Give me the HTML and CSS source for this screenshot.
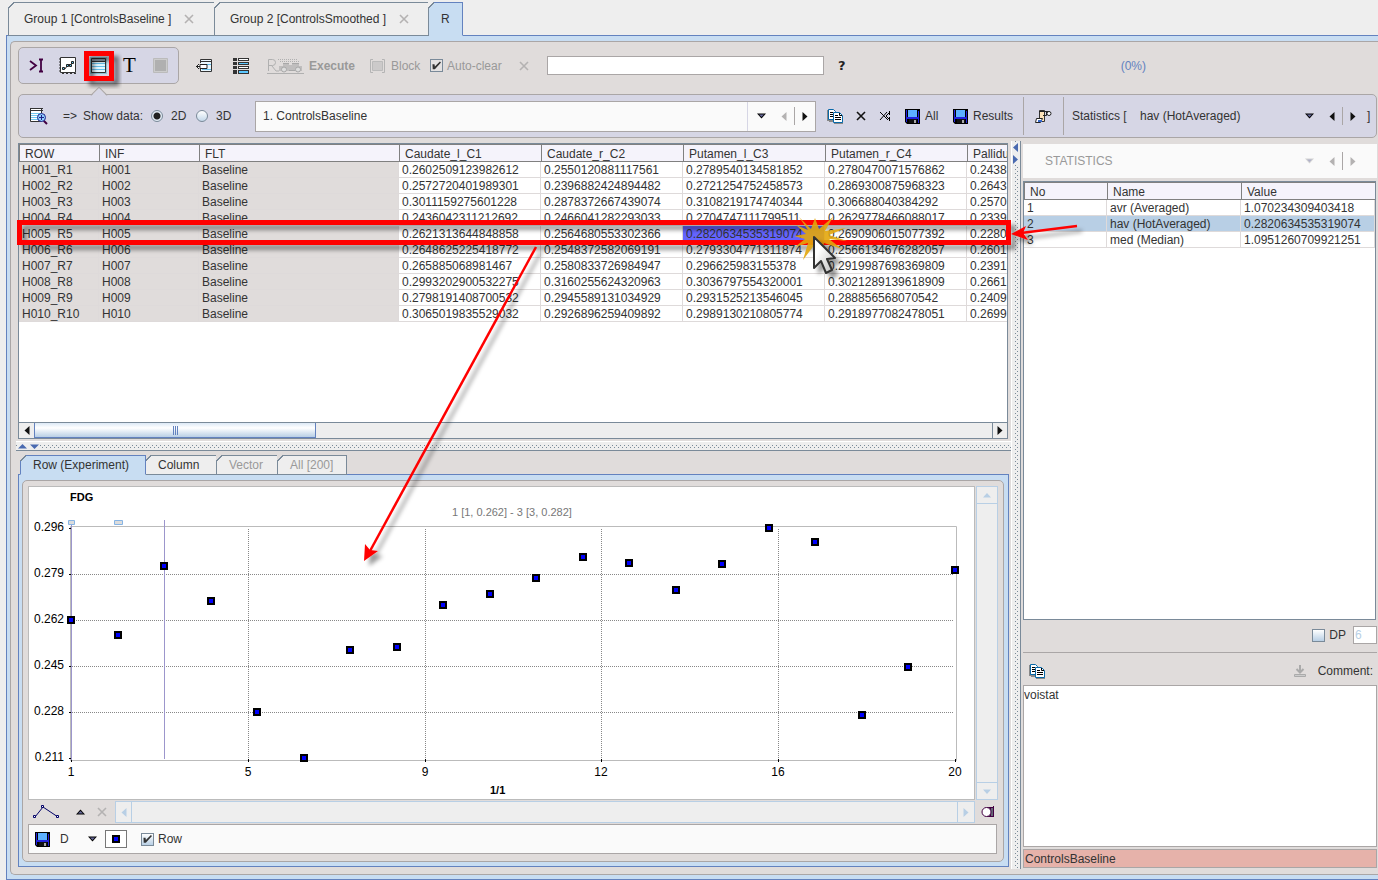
FILE: index.html
```html
<!DOCTYPE html>
<html lang="en">
<head>
<meta charset="utf-8">
<title>R Console</title>
<link rel="stylesheet" href="styles.css">
</head>
<body>
<svg class="defs" aria-hidden="true">
  <defs>
    <symbol id="disk" viewBox="0 0 15 15"><path d="M0 0h15v15H2l-2-2z" fill="#000"/><path d="M1 1h1v12H1zM13 2h1v12h-1zM2 8h11v2H2z" fill="#2222dd"/><path d="M3 1h9v7H3z" fill="#5cb0ff"/><path d="M4 10h8v4H4z" fill="#111"/><path d="M9 11h2v3H9z" fill="#aaa"/></symbol>
    <symbol id="copy" viewBox="0 0 17 15"><path d="M0 1h2v11H0zM2 11h4v2H2zM7 13h9v2H7z" fill="#888"/><path d="M1.500.5h5l2 2V10.500h-7z" fill="#fff" stroke="#0868a8"/><path d="M3 3.500h3M3 5.500h3M3 7.500h3" stroke="#000"/><path d="M6.500 3.500h6l3 3v7h-9z" fill="#fff" stroke="#0868a8"/><path d="M12.500 4v2.500H15M8 6.500h3M8 8.500h6M8 10.500h6" stroke="#000" fill="none"/></symbol>
    <symbol id="down" viewBox="0 0 9 6"><path d="M0 .5h9L4.500 5.500z" fill="currentColor"/><path d="M2 1.500h5L4.500 4z" fill="#66689a"/></symbol>
    <symbol id="left" viewBox="0 0 6 9"><path d="M5.500 0v9L.5 4.500z" fill="currentColor"/></symbol>
    <symbol id="right" viewBox="0 0 6 9"><path d="M.5 0v9l5-4.500z" fill="currentColor"/></symbol>
    <symbol id="cross" viewBox="0 0 10 10"><path d="M1 1l8 8M9 1L1 9" stroke="currentColor" stroke-width="1.600"/></symbol>
    <g id="pt"><path d="M0 0h8v8H0z" fill="#000"/><path d="M2 2h4v4H2z" fill="#00f"/></g>
  </defs>
</svg>

<div class="app">
  <nav class="tabs">
    <button class="tab tab-1">Group 1 [ControlsBaseline ] <svg class="x10 dim"><use href="#cross"/></svg></button>
    <button class="tab tab-2">Group 2 [ControlsSmoothed ] <svg class="x10 dim"><use href="#cross"/></svg></button>
    <button class="tab tab-3 active">R</button>
  </nav>

  <main class="pane">
    <div class="panel">
      <div class="toolbar">
        <div class="group">
          <button aria-label="Console"><svg width="17" height="17" viewBox="0 0 17 17"><path d="M1 4l6 4.500L1 13M10 2.500h4M10 14.500h4M12 2v12" fill="none" stroke="#420042" stroke-width="1.800"/></svg></button>
          <button aria-label="Plots"><svg width="17" height="17" viewBox="0 0 17 17"><path d="M1.500.5h15v15h-15z" fill="#fff" stroke="#333" /><path d="M0 2h2M0 5h2M0 8h2M0 11h2M0 14h2M3 16.500h2M7 16.500h2M11 16.500h2M15 16.500h2" stroke="#333"/><path d="M4.500 11.500h2l2-4h3l2-2" stroke="#222" fill="none"/><path d="M3.500 10.500h2v2h-2zM7.500 7.500h2v2h-2zM10.500 7.500h2v2h-2zM12.500 4.500h2v2h-2z" fill="#5cc8f0" stroke="#222"/></svg></button>
          <button aria-label="Data"><svg width="17" height="17" viewBox="0 0 17 17"><path d="M0 0h17v17H0z" fill="#8cc4d4"/><path d="M2 4h13v11H2z" fill="#e4f8ff"/><path d="M2 6.500h13M2 9.500h13M2 12.500h13" stroke="#65bfea"/><path d="M1.500 1.500h14v14h-14zM1 4.500h15" fill="none" stroke="#333"/><path d="M2 2h13v2H2z" fill="#9ab"/></svg></button>
          <button class="glyph" aria-label="Text">T</button>
          <button aria-label="Stop"><svg width="15" height="15" viewBox="0 0 15 15"><path d="M.5.5h14v14H.5z" fill="#ccc" stroke="#bbb"/><path d="M2 2h11v11H2z" fill="#b0b0b0"/></svg></button>
          <span class="pointer"></span>
        </div>
        <button aria-label="Import"><svg width="17" height="15" viewBox="0 0 17 15"><path d="M5 1h11v13H5z" fill="#eaf8ff"/><path d="M6 6.500h9M6 11.500h9" stroke="#65bfea"/><path d="M4.500 5V1.500h11v12h-11V11M5 3.500h11" fill="none" stroke="#333"/><path d="M2 7h9v3H2z" fill="#fff"/><path d="M0 8.500h4V6.500h7v4H4v-2M3 6L.5 8.500 3 11" fill="none" stroke="#222"/></svg></button>
        <button aria-label="List"><svg width="16" height="16" viewBox="0 0 16 16"><path d="M0 0h4v3H0zM0 4h4v3H0zM0 8h4v3H0zM0 12h4v4H0zM5 0h11v3H5zM5 4h11v3H5zM5 8h11v3H5zM5 12h11v4H5z" fill="#333"/><path d="M6 5h9v1H6zM6 13h9v2H6z" fill="#5cc8ff"/><path d="M6 1h9v1H6zM6 9h9v1H6z" fill="#fff"/></svg></button>
        <button class="exec" disabled><svg width="37" height="16" viewBox="0 0 37 16"><path d="M1.500 13V1.500h4q3 0 3 3t-3 3h-4M5 8l4 5h3M0 15.500h37" fill="none" stroke="#b0b0b0"/><path d="M11 1.500h20M13 3.500h20" stroke="#b0b0b0" stroke-dasharray="1 1"/><path d="M12 8h4V5h6v2h3V5h7v3h3v5H12z" fill="#c0bebe"/><circle cx="17" cy="11.500" r="2.500" fill="#ddd" stroke="#a8a8a8"/><circle cx="31" cy="11.500" r="2.500" fill="#ddd" stroke="#a8a8a8"/><path d="M22 12.500h6M16 5.500h6M25 5.500h7" stroke="#a8a8a8"/></svg>Execute</button>
        <button class="block" disabled><svg width="15" height="14" viewBox="0 0 15 14"><path d="M3 .5H.5v13H3M12 .5h2.500v13H12" fill="none" stroke="#b4b4b4"/><path d="M2.500 2.500h10v9h-10z" fill="#cccaca" stroke="#bbb"/></svg>Block</button>
        <label class="check auto"><input type="checkbox" checked disabled>Auto-clear</label>
        <svg class="x10 dim clear"><use href="#cross"/></svg>
        <input class="command" type="text" aria-label="Command">
        <button class="help">?</button>
        <span class="progress">(0%)</span>
      </div>

      <div class="databar">
        <button aria-label="Inspect"><svg width="18" height="18" viewBox="0 0 18 18"><path d="M.5 1.500h11v13H.5z" fill="#fff" stroke="#333"/><path d="M0 1.500h13M0 3.500h13" stroke="#333"/><path d="M1 6.500h11M1 8.500h11M1 10.500h11M1 12.500h11" stroke="#70c8f0"/><path d="M13 13l4 4" stroke="#420042" stroke-width="2"/><circle cx="11.500" cy="10.500" r="4" fill="#8fd0ff" stroke="#222288"/><path d="M9 10.500h5M11.500 8v5" stroke="#222288"/></svg></button>
        <span>=&gt;</span>
        <span>Show data:</span>
        <label class="radio"><input type="radio" name="dim" checked>2D</label>
        <label class="radio"><input type="radio" name="dim">3D</label>
        <div class="combo">
          <input type="text" value="1. ControlsBaseline" aria-label="Data set">
          <div class="steps"><button aria-label="Open"><svg class="dn"><use href="#down"/></svg></button><button aria-label="Previous" class="off"><svg class="sd"><use href="#left"/></svg></button><i></i><button aria-label="Next"><svg class="sd"><use href="#right"/></svg></button></div>
        </div>
        <button aria-label="Copy"><svg width="17" height="15"><use href="#copy"/></svg></button>
        <button aria-label="Remove"><svg class="x10"><use href="#cross"/></svg></button>
        <button aria-label="Remove all"><svg width="12" height="10" viewBox="0 0 12 10"><path d="M1 1l8 8M8 1L1 9M11 1L7 5l4 4M10.500 0v4M10.500 6v4" stroke="#000" fill="none"/></svg></button>
        <button><svg class="disk"><use href="#disk"/></svg>All</button>
        <button><svg class="disk"><use href="#disk"/></svg>Results</button>
        <i class="bar"></i>
        <button aria-label="Script"><svg width="17" height="15" viewBox="0 0 17 15"><path d="M4.500 1.500h5v11h-5z" fill="#fde3b8" stroke="#333"/><path d="M1.500 9.500h6l-2 4H.5z" fill="#fff" stroke="#222"/><path d="M3 12h4" stroke="#36c" stroke-width="2"/><path d="M4 2.500h10.500v3M8 6.500h3.500V3" stroke="#222" fill="none"/><circle cx="14" cy="4.500" r="2" fill="#fff" stroke="#222"/></svg></button>
        <i class="bar"></i>
        <span>Statistics [</span>
        <span>hav (HotAveraged)</span>
        <div class="steps"><button aria-label="Open"><svg class="dn"><use href="#down"/></svg></button><button aria-label="Previous"><svg class="sd"><use href="#left"/></svg></button><i></i><button aria-label="Next"><svg class="sd"><use href="#right"/></svg></button></div>
        <span>]</span>
      </div>

      <div class="split">
        <section class="left">
          <div class="grid-box">
            <div class="grid-view">
              <table class="data">
                <colgroup><col class="c80"><col class="c100"><col class="c200"><col class="c142"><col class="c142"><col class="c142"><col class="c142"><col class="c142"></colgroup>
                <thead><tr><th>ROW</th><th>INF</th><th>FLT</th><th>Caudate_l_C1</th><th>Caudate_r_C2</th><th>Putamen_l_C3</th><th>Putamen_r_C4</th><th>Pallidu</th></tr></thead>
                <tbody>
                  <tr><td>H001_R1</td><td>H001</td><td>Baseline</td><td>0.2602509123982612</td><td>0.2550120881117561</td><td>0.2789540134581852</td><td>0.2780470071576862</td><td>0.2438</td></tr>
                  <tr><td>H002_R2</td><td>H002</td><td>Baseline</td><td>0.2572720401989301</td><td>0.2396882424894482</td><td>0.2721254752458573</td><td>0.2869300875968323</td><td>0.2643</td></tr>
                  <tr><td>H003_R3</td><td>H003</td><td>Baseline</td><td>0.3011159275601228</td><td>0.2878372667439074</td><td>0.3108219174740344</td><td>0.306688040384292</td><td>0.2570</td></tr>
                  <tr><td>H004_R4</td><td>H004</td><td>Baseline</td><td>0.2436042311212692</td><td>0.2466041282293033</td><td>0.2704747111799511</td><td>0.2629778466088017</td><td>0.2339</td></tr>
                  <tr><td>H005_R5</td><td>H005</td><td>Baseline</td><td>0.2621313644848858</td><td>0.2564680553302366</td><td class="picked">0.2820634535319074</td><td>0.2690906015077392</td><td>0.2280</td></tr>
                  <tr><td>H006_R6</td><td>H006</td><td>Baseline</td><td>0.2648625225418772</td><td>0.2548372582069191</td><td>0.2793304771311874</td><td>0.2566134676282057</td><td>0.2601</td></tr>
                  <tr><td>H007_R7</td><td>H007</td><td>Baseline</td><td>0.265885068981467</td><td>0.2580833726984947</td><td>0.296625983155378</td><td>0.2919987698369809</td><td>0.2391</td></tr>
                  <tr><td>H008_R8</td><td>H008</td><td>Baseline</td><td>0.2993202900532275</td><td>0.3160255624320963</td><td>0.3036797554320001</td><td>0.3021289139618909</td><td>0.2661</td></tr>
                  <tr><td>H009_R9</td><td>H009</td><td>Baseline</td><td>0.2798191408700532</td><td>0.2945589131034929</td><td>0.2931525213546045</td><td>0.288856568070542</td><td>0.2409</td></tr>
                  <tr><td>H010_R10</td><td>H010</td><td>Baseline</td><td>0.3065019835529032</td><td>0.2926896259409892</td><td>0.2989130210805774</td><td>0.2918977082478051</td><td>0.2699</td></tr>
                </tbody>
              </table>
            </div>
            <div class="scroll-x">
              <button aria-label="Scroll left"><svg class="sd"><use href="#left"/></svg></button>
              <div class="track"><div class="thumb"><i></i><i></i><i></i></div></div>
              <button aria-label="Scroll right"><svg class="sd"><use href="#right"/></svg></button>
            </div>
          </div>
          <div class="divider-x"><svg width="22" height="5" viewBox="0 0 22 5"><path d="M0 4.500L4.500 0 9 4.500zM12 .5h9L16.500 5z" fill="#4a6ab0"/></svg></div>

          <nav class="subtabs">
            <button class="tab active">Row (Experiment)</button>
            <button class="tab">Column</button>
            <button class="tab" disabled>Vector</button>
            <button class="tab" disabled>All [200]</button>
          </nav>
          <div class="subpane">
            <div class="subpanel">
              <div class="chart-row">
                <div class="chart">
                  <svg viewBox="29 487 945 311" preserveAspectRatio="xMinYMin meet" role="img" aria-label="FDG">
                    <g class="frame"><path d="M70.500 526.500h886v234h-886z"/></g>
                    <g class="dots"><path d="M72 574.500h881M72 620.500h881M72 666.500h881M72 712.500h881M248.500 529v231M425.500 529v231M601.500 529v231M778.500 529v231"/></g>
                    <g class="marks"><path d="M71.500 525v235M164.500 520v239"/></g>
                    <g class="grips"><path d="M68.500 520.500h6v4h-6zM114.500 520.500h8v4h-8z"/></g>
                    <path class="ticks" d="M69 528.500h2M69 574.500h2M69 620.500h2M69 666.500h2M69 712.500h2M69 758.500h2M71.500 760v2M248.500 759v3M425.500 759v3M601.500 759v3M778.500 759v3M955.500 759v3"/>
                    <g class="ylab"><text x="64" y="531">0.296</text><text x="64" y="577">0.279</text><text x="64" y="623">0.262</text><text x="64" y="669">0.245</text><text x="64" y="715">0.228</text><text x="64" y="761">0.211</text></g>
                    <g class="xlab"><text x="71" y="776">1</text><text x="248" y="776">5</text><text x="425" y="776">9</text><text x="601" y="776">12</text><text x="778" y="776">16</text><text x="955" y="776">20</text></g>
                    <text class="bold" x="70" y="501">FDG</text>
                    <text class="bold" x="490" y="794">1/1</text>
                    <text class="range" x="452" y="516">1 [1, 0.262] - 3 [3, 0.282]</text>
                    <use href="#pt" x="67" y="616"/><use href="#pt" x="114" y="631"/><use href="#pt" x="160" y="562"/><use href="#pt" x="207" y="597"/><use href="#pt" x="253" y="708"/><use href="#pt" x="300" y="754"/><use href="#pt" x="346" y="646"/><use href="#pt" x="393" y="643"/><use href="#pt" x="439" y="601"/><use href="#pt" x="486" y="590"/><use href="#pt" x="532" y="574"/><use href="#pt" x="579" y="553"/><use href="#pt" x="625" y="559"/><use href="#pt" x="672" y="586"/><use href="#pt" x="718" y="560"/><use href="#pt" x="765" y="524"/><use href="#pt" x="811" y="538"/><use href="#pt" x="858" y="711"/><use href="#pt" x="904" y="663"/><use href="#pt" x="951" y="566"/>
                  </svg>
                </div>
                <div class="scroll-y">
                  <button disabled aria-label="Scroll up"><svg width="8" height="5" viewBox="0 0 8 5"><path d="M0 4.500L4 0l4 4.500z" fill="#b8cfe5"/></svg></button>
                  <div></div>
                  <button disabled aria-label="Scroll down"><svg width="8" height="5" viewBox="0 0 8 5"><path d="M0 .5L4 5l4-4.500z" fill="#b8cfe5"/></svg></button>
                </div>
              </div>
              <div class="range-row">
                <button aria-label="Curve"><svg width="27" height="14" viewBox="0 0 27 14"><path d="M2 12l8-10 15 10" fill="none" stroke="#000066"/><path d="M.5 10.500h2v2h-2zM8.500.5h2v2h-2zM23.500 10.500h2v2h-2z" fill="#fff" stroke="#000066"/></svg></button>
                <button aria-label="Up"><svg class="dn flip"><use href="#down"/></svg></button>
                <button disabled aria-label="Clear"><svg class="x10 dim"><use href="#cross"/></svg></button>
                <div class="slider"><button disabled aria-label="Left"><svg class="sd"><use href="#left"/></svg></button><div></div><button disabled aria-label="Right"><svg class="sd"><use href="#right"/></svg></button></div>
                <button class="lens" aria-label="Reset"><svg width="14" height="12" viewBox="0 0 14 12"><path d="M8 1h5v10H8z" fill="#667"/><path d="M6 1.500h7M6 10.500h7M12.500 0v11M9.500 2v8" stroke="#420042"/><circle cx="5.500" cy="6" r="4.500" fill="#fff" stroke="#420042"/></svg></button>
              </div>
              <div class="curve-row">
                <button aria-label="Save"><svg class="disk"><use href="#disk"/></svg></button>
                <span class="d">D</span>
                <button aria-label="Menu"><svg class="dn"><use href="#down"/></svg></button>
                <button class="swatch" aria-label="Marker"><svg width="8" height="8"><use href="#pt"/></svg></button>
                <label class="check"><input type="checkbox" checked>Row</label>
              </div>
            </div>
          </div>
        </section>

        <div class="divider-y"><svg width="6" height="22" viewBox="0 0 6 22"><path d="M5 0v9L0 4.500zM0 12v9l5-4.500z" fill="#4a6ab0"/></svg></div>

        <section class="right">
          <header class="stat-head"><span>STATISTICS</span><div class="steps off"><button disabled aria-label="Open"><svg class="dn gray"><use href="#down"/></svg></button><button disabled aria-label="Previous"><svg class="sd"><use href="#left"/></svg></button><i></i><button disabled aria-label="Next"><svg class="sd"><use href="#right"/></svg></button></div></header>
          <div class="stat-box">
            <table class="data stats">
              <colgroup><col class="c83"><col class="c134"><col></colgroup>
              <thead><tr><th>No</th><th>Name</th><th>Value</th></tr></thead>
              <tbody>
                <tr><td>1</td><td>avr (Averaged)</td><td>1.070234309403418</td></tr>
                <tr class="chosen"><td>2</td><td>hav (HotAveraged)</td><td>0.2820634535319074</td></tr>
                <tr><td>3</td><td>med (Median)</td><td>1.0951260709921251</td></tr>
              </tbody>
            </table>
          </div>
          <div class="dp-row"><label class="check"><input type="checkbox">DP</label><input type="text" class="digits" value="6" disabled aria-label="Decimal places"></div>
          <div class="comment-row">
            <button aria-label="Copy statistics"><svg width="17" height="15"><use href="#copy"/></svg></button>
            <svg class="load" width="12" height="12" viewBox="0 0 12 12"><path d="M6 0v7M2.500 4L6 7.500 9.500 4" stroke="#aaa" stroke-width="2" fill="none"/><path d="M.5 9.500h11v2H.5z" fill="#ccc" stroke="#aaa"/></svg>
            <label for="comment">Comment:</label>
          </div>
          <textarea id="comment">voistat</textarea>
          <div class="status">ControlsBaseline</div>
        </section>
      </div>
    </div>
  </main>

  <svg class="notes" width="1378" height="880" viewBox="0 0 1378 880" aria-hidden="true">
    <defs>
      <filter id="sh" x="-20%" y="-20%" width="160%" height="160%"><feDropShadow dx="5" dy="5" stdDeviation="2" flood-color="#000" flood-opacity=".5"/></filter>
      <filter id="sh2" x="0" y="0" width="1378" height="880" filterUnits="userSpaceOnUse"><feDropShadow dx="5" dy="5" stdDeviation="2" flood-color="#000" flood-opacity=".4"/></filter>
      <linearGradient id="cur" x1="0" y1="0" x2="1" y2="1"><stop offset=".3" stop-color="#fff"/><stop offset="1" stop-color="#bbb"/></linearGradient>
    </defs>
    <rect x="86.500" y="53.500" width="25" height="25" class="ring" filter="url(#sh)"/>
    <rect x="19.500" y="222.500" width="989" height="20" class="ring" filter="url(#sh2)"/>
    <g filter="url(#sh2)" fill="#f00">
      <path d="M536 247L370 551" stroke="#f00" stroke-width="2.500"/><path d="M364 561l1-17 5 6 8 1z"/>
      <path d="M1077 226l-56 7" stroke="#f00" stroke-width="2.500"/><path d="M1011 234l15-8-3 7 5 7z"/>
    </g>
    <path d="M799 217L811 229 815 218 819 229 833 217 825 231 846 228 829 235 847 241 829 239 842 249 824 243 822 252 815 244 803 260 808 243 795 247 805 239 794 236 806 234 796 225 808 230z" fill="#e2a60c" fill-opacity=".9"/>
    <path d="M814 237v31l7-7 5 12 6-3-5-11 8-1z" fill="url(#cur)" stroke="#333" stroke-width="2" stroke-linejoin="round" filter="url(#sh2)"/>
  </svg>
</div>
</body>
</html>
```
FILE: styles.css
```css
* { box-sizing: border-box; }
body {
  margin: 0;
  background: #eee;
  color: #333;
  font: 12px/16px "Liberation Sans", Arial, sans-serif;
  overflow: hidden;
}
button, input, textarea { font: inherit; color: inherit; margin: 0; }
button {
  display: inline-flex;
  align-items: center;
  padding: 0;
  border: 0;
  background: none;
  white-space: nowrap;
}
svg { display: block; flex: none; }
.defs { position: absolute; width: 0; height: 0; }
.app { position: relative; display: flex; flex-direction: column; height: 100vh; }
.notes { position: absolute; left: 0; top: 0; pointer-events: none; }
.ring { fill: none; stroke: #f00; stroke-width: 5px; }

.x10 { width: 10px; height: 10px; color: #111; }
.dn { width: 9px; height: 6px; color: #000; }
.flip { transform: rotate(180deg); }
.sd { width: 6px; height: 9px; }
.disk { width: 15px; height: 15px; margin-right: 5px; }
.dim { color: #b4b2b2; }

/* tabs */
.tabs { display: flex; padding: 2px 0 0 8px; }
.tab {
  position: relative;
  border: 1px solid #7a8a99;
  border-left: 0;
  background: #eee;
}
.tab::before {
  content: "";
  position: absolute;
  left: -1px;
  top: -1px;
  width: 6px;
  height: 6px;
  background: linear-gradient(135deg, #eee 45%, #7a8a99 45% 60%, transparent 60%);
}
.tabs .tab { height: 34px; margin-bottom: -1px; gap: 13px; }
.tab-1 { width: 207px; padding-left: 15px; }
.tabs .tab-1 { border-left: 1px solid #7a8a99; }
.tab-2 { width: 214px; padding-left: 15px; }
.tab-3 { width: 34px; padding-left: 12px; }
.tab.active { background: #c8ddf2; border-color: #6382bf; border-bottom-color: #c8ddf2; z-index: 1; }

.pane {
  flex: 1;
  display: flex;
  min-height: 0;
  margin-left: 6px;
  padding: 5px 0 4px 3px;
  border: 1px solid #6382bf;
  border-right: 0;
  background: #c8ddf2;
}
.panel {
  flex: 1;
  display: flex;
  flex-direction: column;
  min-width: 0;
  padding: 5px 1px 5px 7px;
  border: 1px solid #aaa6a6;
  border-right: 0;
  border-radius: 5px 0 0 5px;
  background: #e0dcdb;
}

/* first toolbar */
.toolbar { display: flex; align-items: center; height: 37px; }
.group {
  position: relative;
  display: grid;
  grid-template-columns: 30px 31px 33px 30px 1fr;
  align-items: center;
  width: 161px;
  height: 37px;
  margin-right: 17px;
  padding-left: 10px;
  border: 1px solid #aaa6a6;
  border-radius: 5px;
  background: #d6d6e5;
}
.glyph { font: 21px/21px "Liberation Serif", serif; color: #000; }
.pointer {
  position: absolute;
  left: 74px;
  top: 41px;
  width: 12px;
  height: 12px;
  border: 1px solid #aaa6a6;
  border-width: 1px 0 0 1px;
  background: linear-gradient(135deg, #d6d6e5 50%, transparent 50%);
  transform: rotate(45deg);
  z-index: 1;
}
.toolbar > button:nth-of-type(1) { width: 37px; }
.toolbar > button:nth-of-type(2) { width: 34px; }
.exec { width: 103px; gap: 5px; color: #999; font-weight: bold; }
.block { width: 60px; gap: 6px; color: #999; }
.check { display: inline-flex; align-items: center; gap: 4px; }
.auto { width: 89px; color: #999; }
.check input {
  appearance: none;
  width: 13px;
  height: 13px;
  border: 1px solid #7a8a99;
  background: linear-gradient(#fff, #b8cfe5);
}
.check input:checked::before {
  content: "";
  display: block;
  width: 9px;
  height: 9px;
  margin: 1px;
  background: #333;
  clip-path: polygon(5% 35%, 28% 35%, 32% 60%, 88% 5%, 100% 18%, 32% 92%, 8% 92%);
}
.auto input { background: #e4e2e2; }
.clear { margin-right: 18px; }
.command { width: 277px; height: 19px; padding: 0 2px; border: 1px solid #aaa6a6; background: #fff; }
.help { margin-left: 14px; color: #222; font: bold 13px/16px "DejaVu Sans", sans-serif; }
.progress { margin: 0 231px 0 auto; color: #6382bf; }

/* second toolbar */
.databar {
  display: grid;
  grid-template-columns: 33px 20px 68px 45px 59px 1fr 29px 23px 26px 48px 70px 12px 28px 9px 68px 163px 64px 9px;
  align-items: center;
  height: 44px;
  margin-top: 10px;
  padding-left: 11px;
  border: 1px solid #aaa6a6;
  border-radius: 5px;
  background: #d6d6e5;
  white-space: nowrap;
}
.radio { display: inline-flex; align-items: center; gap: 8px; }
.radio input {
  appearance: none;
  width: 12px;
  height: 12px;
  border: 1px solid #7a8a99;
  border-radius: 50%;
  background: linear-gradient(#fff, #c4d8ea);
}
.radio input:checked { background: radial-gradient(circle, #222 3px, #e4edf6 4px); }
.combo { display: flex; height: 31px; margin-right: 11px; border: 1px solid #aaa6a6; background: #fafafa; }
.combo input { flex: 1; min-width: 0; padding: 0 7px; border: 0; border-right: 1px solid #d6d6e5; background: none; }
.combo .steps { width: 67px; padding-left: 8px; }
.steps { display: grid; grid-template-columns: 24px 14px 7px 1fr; align-items: center; color: #111; }
.steps i { width: 1px; height: 18px; background: #aaa6a6; }
.steps > button { padding-left: 1px; }
.databar > .steps { padding-left: 1px; }
.steps .off { color: #b4b2b2; }
.gray { color: #aaa; opacity: .5; }
.bar { width: 1px; height: 38px; background: #aaa6a6; }

/* main split */
.split { flex: 1; display: grid; grid-template-columns: minmax(0, 1fr) 12px 354px; min-height: 0; margin-top: 3px; }
.left { display: flex; flex-direction: column; min-width: 0; min-height: 0; }
.grid-box { display: flex; flex-direction: column; height: 296px; margin: 2px 3px 0 0; border: 1px solid #7a8a99; background: #fff; }
.grid-view { flex: 1; overflow: hidden; }
.data { width: 100%; table-layout: fixed; border-collapse: separate; border-spacing: 0; }
.grid-view .data { width: 1090px; }
.c80 { width: 80px; } .c100 { width: 100px; } .c200 { width: 200px; } .c142 { width: 142px; }
.c83 { width: 83px; } .c134 { width: 134px; }
.data th {
  height: 18px;
  padding: 2px 5px 0;
  border: solid #808080;
  border-width: 1px 0 1px 1px;
  background: #f5f3fb;
  font-weight: normal;
  text-align: left;
  line-height: 14px;
}
.data td {
  height: 16px;
  padding: 1px 3px 0;
  border: solid #dedada;
  border-width: 0 1px 1px 0;
  line-height: 14px;
  white-space: nowrap;
}
.grid-view td:nth-child(-n+3) { background: #e0dcdb; }
.data .picked { background: #6464ff; }
.chosen td { background: #b8cfe5; }

.scroll-x { display: flex; height: 16px; border-top: 1px solid #7a8a99; background: #eee; }
.scroll-x > button { width: 15px; justify-content: center; color: #111; }
.scroll-x > button:last-child { border-left: 1px solid #7a8a99; }
.track { flex: 1; }
.thumb {
  display: flex;
  align-items: center;
  justify-content: center;
  gap: 1px;
  width: 30%;
  max-width: 282px;
  height: 15px;
  border: 1px solid #6382bf;
  border-top: 0;
  background: linear-gradient(#dce9f6, #fff 35%, #b8cfe5);
}
.thumb i { width: 1px; height: 9px; background: #6382bf; }
.divider-x, .divider-y {
  --dot: conic-gradient(from 270deg at 1px 1px, #7a8a99 90deg, transparent 0);
}
.divider-x {
  height: 9px;
  margin: 3px 0 0 -2px;
  padding: 2px;
  border-bottom: 1px solid #7a8a99;
  box-shadow: 0 -1px #fff;
  background: var(--dot) 0 3px / 4px 4px repeat-x, var(--dot) 2px 5px / 4px 4px repeat-x, #eee;
}
.divider-y {
  margin-right: 2px;
  padding: 2px 3px 0 1px;
  border-right: 1px solid #7a8a99;
  border-left: 1px solid #fff;
  background: var(--dot) 3px 0 / 4px 4px repeat-y, var(--dot) 5px 2px / 4px 4px repeat-y, #eee;
}
.divider-y svg, .divider-x svg { background: #eee; }

.subtabs { display: flex; padding: 4px 0 0 2px; }
.subtabs .tab { height: 20px; margin-bottom: -1px; padding: 0 0 0 12px; }
.subtabs .tab:nth-child(1) { width: 126px; border-left: 1px solid #6382bf; }
.subtabs .tab:nth-child(2) { width: 71px; }
.subtabs .tab:nth-child(3) { width: 61px; }
.subtabs .tab:nth-child(4) { width: 69px; }
.subtabs .tab::before { background: linear-gradient(135deg, #e0dcdb 45%, #7a8a99 45% 60%, transparent 60%); }
.tab:disabled { color: #999; }
.subpane {
  flex: 1;
  display: flex;
  min-height: 0;
  margin: 0 2px 2px 0;
  padding: 5px 4px 4px 3px;
  border: 1px solid #6382bf;
  background: #c8ddf2;
}
.subpanel {
  flex: 1;
  display: flex;
  flex-direction: column;
  min-width: 0;
  padding: 5px;
  border: 1px solid #aaa6a6;
  border-radius: 5px;
  background: #e0dcdb;
}
.chart-row { flex: 1; display: flex; gap: 1px; min-height: 0; }
.chart { flex: 1; min-width: 0; border: 1px solid #bbb; background: #fff; }
.chart > svg { width: 100%; height: 100%; }
.frame { fill: none; stroke: #bbb; }
.dots { fill: none; stroke: #888; stroke-dasharray: 1 1; }
.marks { stroke: #9c96cc; }
.grips { fill: #dcdcdc; stroke: #86b4e4; }
.ticks { stroke: #000; }
.chart text { fill: #000; font-size: 12px; }
.ylab { text-anchor: end; }
.xlab { text-anchor: middle; }
.chart .bold { font-size: 11px; font-weight: bold; }
.chart .range { fill: #777; font-size: 11px; }
.scroll-y { display: grid; grid-template-rows: 16px 1fr 16px; width: 22px; border: 1px solid #b8cfe5; background: #eee; }
.scroll-y button { justify-content: center; }
.scroll-y div { border: solid #b8cfe5; border-width: 1px 0; }
.range-row { display: grid; grid-template-columns: 43px 21px 18px 1fr 23px; align-items: center; height: 22px; margin-top: 1px; padding-left: 5px; }
.slider { display: grid; grid-template-columns: 15px 1fr 16px; height: 22px; border: 1px solid #b8cfe5; background: #eee; color: #b8cfe5; }
.slider button { justify-content: center; }
.slider div { border: solid #b8cfe5; border-width: 0 1px; }
.lens { padding-left: 6px; }
.curve-row { display: flex; align-items: center; height: 30px; margin: 1px 1px 2px 0; padding-left: 6px; border: 1px solid #aaa6a6; background: #fafafa; }
.curve-row .disk { margin-right: 10px; }
.d { width: 28px; }
.swatch { justify-content: center; width: 22px; height: 18px; margin: 0 14px 0 8px; border: 1px solid #777; background: #fff; }

/* statistics column */
.right { display: flex; flex-direction: column; min-width: 0; min-height: 0; }
.stat-head { display: flex; align-items: center; justify-content: space-between; height: 34px; margin-top: 3px; padding-left: 22px; background: #fafafa; color: #999; }
.stat-head .steps { width: 73px; color: #b4b2b2; }
.stat-box { flex: 1; min-height: 0; margin: 3px 1px 0 0; border: 1px solid #7a8a99; background: #fff; }
.dp-row { display: flex; justify-content: flex-end; gap: 7px; padding: 6px 0 8px; border-bottom: 1px solid #aaa6a6; }
.digits { width: 24px; height: 18px; padding: 0 1px; border: 1px solid #aaa6a6; background: #fff; color: #b8cfe5; }
.comment-row { display: flex; align-items: center; height: 32px; padding: 4px 4px 0 6px; }
.load { margin: 0 12px 0 auto; }
textarea { height: 162px; padding: 1px 0; border: 1px solid #aaa6a6; background: #fff; resize: none; }
.status { height: 19px; margin: 2px 0 1px; padding: 1px; border: 1px solid #aaa6a6; background: #e6b2aa; }
```
